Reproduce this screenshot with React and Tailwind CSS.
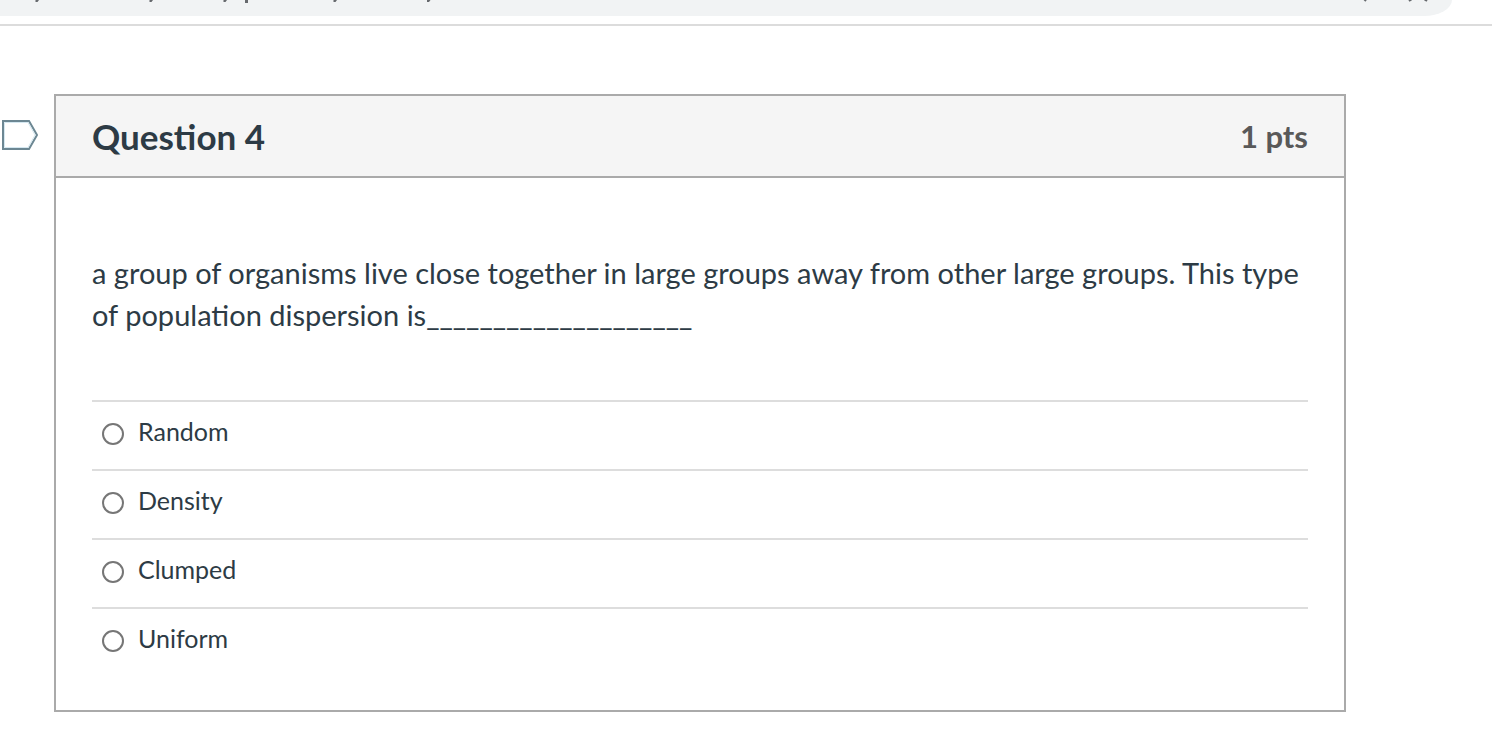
import React, { useState } from "react";

const answers = ["Random", "Density", "Clumped", "Uniform"];

function AddressBar() {
  return (
    <header className="border-b-2 border-[#dcdcdc] pb-2 pr-10">
      <div className="flex h-4 justify-between overflow-hidden rounded-br-[28px_16px] bg-[#f1f3f4]">
        <svg
          width="460"
          height="16"
          viewBox="0 0 460 16"
          fill="#66696d"
          aria-hidden="true"
        >
          <path d="M35.500 0 H39 L37.500 2 H35.500 Z M149.500 0 H153 L151.500 2 H149.500 Z M223.500 0 H227 L225.500 2 H223.500 Z M333.500 0 H337 L335.500 2 H333.500 Z M427 0 H430.500 L429 2 H427 Z" />
          <path d="M245 0 H248 V3 H245 Z" />
        </svg>
        <svg
          width="100"
          height="16"
          viewBox="0 0 100 16"
          fill="none"
          stroke="#66696d"
          strokeWidth="2"
          aria-hidden="true"
        >
          <path d="M12 -1 L14 1 M57 1 L60 -1 M75 1 L72 -1" />
        </svg>
      </div>
    </header>
  );
}

function FlagButton() {
  return (
    <button type="button" aria-label="Flag question" className="mt-[26px] ml-0.5 h-[30px] w-9 shrink-0">
      <svg width="36" height="30" viewBox="0 0 36 30" fill="none" aria-hidden="true">
        <path d="M1 1 H27 L35 15 L27 29 H1 Z" fill="#fff" stroke="#6c8793" strokeWidth="2" />
        <path d="M2.500 2.500 H26 L33 15 L26 27.500 H2.500 Z" stroke="#d5e8f1" strokeWidth="1" />
      </svg>
    </button>
  );
}

function Answer({ text, checked, onSelect }) {
  return (
    <label className="flex h-[69px] cursor-pointer border-t-2 border-[#dddddd] pl-[10px]">
      <input
        type="radio"
        name="question_4"
        value={text}
        checked={checked}
        onChange={onSelect}
        className="mt-[21px] size-[22px] shrink-0 appearance-none rounded-full border-2 border-[#767676] bg-white checked:border-[6px]"
      />
      <span className="mt-[13px] ml-[14px] text-[25px] leading-8">{text}</span>
    </label>
  );
}

function App() {
  const [selected, setSelected] = useState("");

  return (
    <div className="bg-white font-[Lato,sans-serif] text-[#2d3b45]">
      <AddressBar />

      <main className="flex pt-[68px] pb-7">
        <FlagButton />

        <section className="mr-[146px] ml-4 flex-1 border-2 border-[#aaaaaa]">
          <div className="flex h-[82px] items-center justify-between border-b-2 border-[#aaaaaa] bg-[#f5f5f5] px-9">
            <h1 className="text-[35px] font-bold">Question 4</h1>
            <span className="text-[31px] font-bold text-[#595959]">1 pts</span>
          </div>

          <div className="px-9 pt-[74px] pb-[34px]">
            <p className="text-[29px] leading-[42px]">
              a group of organisms live close together in large groups away from
              other large groups. This type of population dispersion
              is____________________
            </p>

            <fieldset aria-label="Answers" className="mt-16">
              {answers.map((text) => (
                <Answer
                  key={text}
                  text={text}
                  checked={selected === text}
                  onSelect={() => setSelected(text)}
                />
              ))}
            </fieldset>
          </div>
        </section>
      </main>
    </div>
  );
}

export default App;
